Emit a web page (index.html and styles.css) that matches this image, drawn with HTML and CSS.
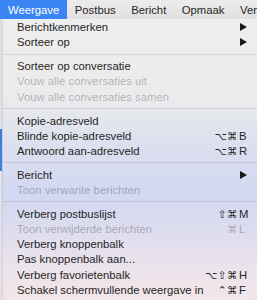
FILE: index.html
```html
<!DOCTYPE html>
<html lang="nl">
<head>
    <meta charset="UTF-8">
    <meta name="viewport" content="width=device-width, initial-scale=1.0">
    <title>Weergave</title>
    <link rel="stylesheet" href="styles.css">
</head>
<body>
    <div class="menubar">
        <span class="bar-item active">Weergave</span>
        <span class="bar-item">Postbus</span>
        <span class="bar-item">Bericht</span>
        <span class="bar-item">Opmaak</span>
        <span class="bar-item">Venster</span>
    </div>

    <div class="stage">
        <div class="window-edge"></div>
        <div class="menu">
            <div class="item"><span>Berichtkenmerken</span><svg class="arrow" width="7" height="8" viewBox="0 0 7 8"><polygon points="0,0 7,4 0,8"/></svg></div>
            <div class="item"><span>Sorteer op</span><svg class="arrow" width="7" height="8" viewBox="0 0 7 8"><polygon points="0,0 7,4 0,8"/></svg></div>
            <div class="sep"></div>
            <div class="item"><span>Sorteer op conversatie</span></div>
            <div class="item off"><span>Vouw alle conversaties uit</span></div>
            <div class="item off"><span>Vouw alle conversaties samen</span></div>
            <div class="sep"></div>
            <div class="item"><span>Kopie-adresveld</span></div>
            <div class="item"><span>Blinde kopie-adresveld</span><span class="keys"><span class="mods">⌥⌘</span><span class="key">B</span></span></div>
            <div class="item"><span>Antwoord aan-adresveld</span><span class="keys"><span class="mods">⌥⌘</span><span class="key">R</span></span></div>
            <div class="sep"></div>
            <div class="item"><span>Bericht</span><svg class="arrow" width="7" height="8" viewBox="0 0 7 8"><polygon points="0,0 7,4 0,8"/></svg></div>
            <div class="item off"><span>Toon verwante berichten</span></div>
            <div class="sep"></div>
            <div class="item"><span>Verberg postbuslijst</span><span class="keys"><span class="mods">⇧⌘</span><span class="key">M</span></span></div>
            <div class="item off"><span>Toon verwijderde berichten</span><span class="keys"><span class="mods">⌘</span><span class="key">L</span></span></div>
            <div class="item"><span>Verberg knoppenbalk</span></div>
            <div class="item"><span>Pas knoppenbalk aan...</span></div>
            <div class="item"><span>Verberg favorietenbalk</span><span class="keys"><span class="mods">⌥⇧⌘</span><span class="key">H</span></span></div>
            <div class="item"><span>Schakel schermvullende weergave in</span><span class="keys"><span class="mods">⌃⌘</span><span class="key">F</span></span></div>
        </div>
    </div>
</body>
</html>
```

FILE: styles.css
```css
body {
    margin: 0;
    padding: 0;
    width: 257px;
    height: 300px;
    overflow: hidden;
    background-color: #e4e4e4;
    font-family: "Liberation Sans", Arial, sans-serif;
    font-size: 11.3px;
    color: #262626;
}
.menubar {
    display: flex;
    height: 19px;
    align-items: stretch;
    background: linear-gradient(#ececec, #e1e1e1);
    white-space: nowrap;
    overflow: hidden;
}
.bar-item {
    display: flex;
    align-items: center;
    padding: 0 7.5px 0 8px;
}
.bar-item.active {
    background-color: #3b84f3;
    color: white;
}
.stage {
    display: flex;
    height: 281px;
}
.window-edge {
    width: 2px;
    flex: none;
    background: linear-gradient(#dedede 0, #dedede 110px, #3f7fd8 110px, #3f7fd8 152px, #e2e0e6 152px);
}
.menu {
    flex: 1;
    padding-top: 0.5px;
    border-radius: 0 0 5px 5px;
    background: linear-gradient(#eeeeee 0%, #ebebed 28%, #dbdfef 46%, #d2d8f1 62%, #dcdcef 74%, #ebe3ec 88%, #f2e6e8 100%);
    box-shadow: inset 1px 0 0 rgba(0, 0, 0, 0.08);
}
.item {
    display: flex;
    align-items: center;
    justify-content: space-between;
    height: 15.2px;
    padding: 0 9px 0 15px;
    white-space: nowrap;
}
.item.off {
    color: rgba(0, 0, 0, 0.27);
}
.sep {
    height: 1px;
    margin: 3.9px 0 3.85px 1px;
    background-color: rgba(0, 0, 0, 0.09);
}
.arrow {
    fill: #1a1a1a;
    margin-right: 1px;
}
.keys {
    display: flex;
    align-items: center;
    font-family: "DejaVu Sans", sans-serif;
    font-size: 10.5px;
}
.mods {
    letter-spacing: 0.5px;
}
.key {
    width: 9px;
    margin-left: 1px;
    font-family: "Liberation Sans", Arial, sans-serif;
    font-size: 11.3px;
}
```
